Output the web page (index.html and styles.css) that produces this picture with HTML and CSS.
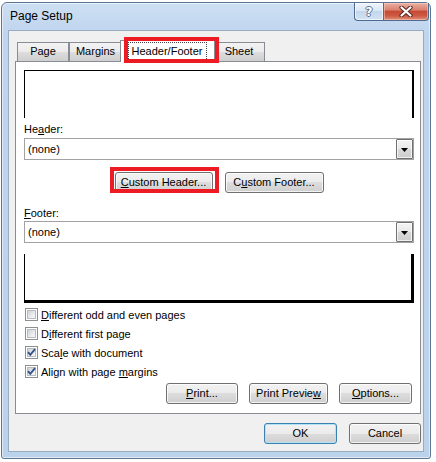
FILE: index.html
```html
<!DOCTYPE html>
<html>
<head>
<meta charset="utf-8">
<title>Page Setup</title>
<link rel="stylesheet" href="styles.css">
</head>
<body>
<div class="window">
  <div class="titlebar">
    <span class="title">Page Setup</span>
    <div class="caption-btns">
      <div class="cap help"><span class="qmark">?</span></div>
      <div class="cap close">
        <svg width="16" height="11" viewBox="0 0 16 11"><path d="M3.5 1.5 L12.5 9.5 M12.5 1.5 L3.5 9.5" stroke="#5a2a24" stroke-width="4.2" stroke-linecap="round" fill="none"/><path d="M3.5 1.5 L12.5 9.5 M12.5 1.5 L3.5 9.5" stroke="#ffffff" stroke-width="2.2" stroke-linecap="round" fill="none"/></svg>
      </div>
    </div>
  </div>
  <div class="client">
    <div class="tabs">
      <div class="tab w52">Page</div>
      <div class="tab w53">Margins</div>
      <div class="tab active"><span class="focus">Header/Footer</span></div>
      <div class="tab w52">Sheet</div>
    </div>
    <div class="panel">
      <div class="preview header-preview"></div>
      <div class="label first">He<u>a</u>der:</div>
      <div class="combo">
        <span class="combo-text">(none)</span>
        <span class="combo-btn"><svg width="7" height="4" viewBox="0 0 7 4"><path d="M0 0H7L3.5 4Z" fill="#000"/></svg></span>
      </div>
      <div class="custom-row">
        <div class="btn w98"><span><u>C</u>ustom Header...</span></div>
        <div class="btn w99"><span>C<u>u</u>stom Footer...</span></div>
      </div>
      <div class="label second"><u>F</u>ooter:</div>
      <div class="combo">
        <span class="combo-text">(none)</span>
        <span class="combo-btn"><svg width="7" height="4" viewBox="0 0 7 4"><path d="M0 0H7L3.5 4Z" fill="#000"/></svg></span>
      </div>
      <div class="preview footer-preview"></div>
      <div class="checks">
        <div class="check"><span class="cb"><i></i></span><span><u>D</u>ifferent odd and even pages</span></div>
        <div class="check"><span class="cb"><i></i></span><span>D<u>i</u>fferent first page</span></div>
        <div class="check"><span class="cb"><i></i><svg width="11" height="11" viewBox="0 0 11 11"><path d="M2 5.2 L4.3 7.8 L9 2.2" stroke="#34518a" stroke-width="1.9" fill="none"/></svg></span><span>Sca<u>l</u>e with document</span></div>
        <div class="check"><span class="cb"><i></i><svg width="11" height="11" viewBox="0 0 11 11"><path d="M2 5.2 L4.3 7.8 L9 2.2" stroke="#34518a" stroke-width="1.9" fill="none"/></svg></span><span>Align with page <u>m</u>argins</span></div>
      </div>
      <div class="print-row">
        <div class="btn w72"><span><u>P</u>rint...</span></div>
        <div class="btn w79"><span>Print Previe<u>w</u></span></div>
        <div class="btn w73"><span><u>O</u>ptions...</span></div>
      </div>
    </div>
    <div class="dialog-btns">
      <div class="btn default w73"><span>OK</span></div>
      <div class="btn w72"><span>Cancel</span></div>
    </div>
  </div>
</div>
<div class="callout callout-tab"></div>
<div class="callout callout-btn"></div>
</body>
</html>
```

FILE: styles.css
```css
* { box-sizing: border-box; }
html, body { margin: 0; padding: 0; }
body {
  width: 436px;
  height: 462px;
  background: #ffffff;
  font-family: "Liberation Sans", Arial, sans-serif;
  font-size: 11px;
  color: #000;
  position: relative;
  overflow: hidden;
}
u { text-decoration: underline; text-underline-offset: 1px; }

.window {
  margin: 2px 0 0 1px;
  width: 430px;
  height: 457px;
  border: 1px solid #5d7593;
  border-radius: 6px 6px 3px 3px;
  background: linear-gradient(#cddff3, #bfd5ee 30px, #bbd2eb 100%);
  box-shadow: inset 0 0 0 1px rgba(255,255,255,0.55);
  display: flex;
  flex-direction: column;
}

.titlebar {
  height: 27px;
  flex: none;
  display: flex;
  align-items: flex-start;
  justify-content: space-between;
  padding-left: 8px;
}
.title {
  font-size: 12px;
  line-height: 26px;
  color: #000;
}
.caption-btns {
  display: flex;
  margin-right: 1px;
}
.cap {
  height: 18px;
  border: 1px solid #4f6a8e;
  border-top: none;
  display: flex;
  align-items: center;
  justify-content: center;
}
.help {
  width: 29px;
  border-right: none;
  border-radius: 0 0 0 4px;
  background: linear-gradient(#eef4fb, #dbe7f5 45%, #c3d6ec 50%, #d3e3f4);
  box-shadow: inset 0 0 0 1px rgba(255,255,255,0.6);
}
.qmark {
  font-family: "DejaVu Sans", sans-serif;
  font-weight: bold;
  font-size: 12px;
  line-height: 12px;
  color: #fff;
  text-shadow: 1px 0 0 #5c6f8a, -1px 0 0 #5c6f8a, 0 1px 0 #5c6f8a, 0 -1px 0 #5c6f8a;
}
.close {
  width: 46px;
  border-radius: 0 0 4px 0;
  background: linear-gradient(#eab0a2, #d98372 40%, #c84a35 50%, #cc5a42 75%, #e2907a);
  box-shadow: inset 0 0 0 1px rgba(255,220,210,0.45);
}

.client {
  flex: 1;
  margin: 0 6px 6px 6px;
  background: #f0f0f0;
  border: 1px solid #98abc1;
  display: flex;
  flex-direction: column;
  padding: 6px 2px 0 6px;
}

.tabs {
  height: 24px;
  flex: none;
  display: flex;
  align-items: flex-end;
  padding-left: 2px;
  position: relative;
  z-index: 1;
}
.tab {
  height: 19px;
  border: 1px solid #898c95;
  border-bottom: none;
  line-height: 17px;
  text-align: center;
  background: linear-gradient(#f3f3f3, #ebebeb 50%, #dddddd 50%, #cfcfcf);
  white-space: nowrap;
}
.tab.w52 { width: 52px; }
.tab.w53 { width: 53px; }
.tab.active {
  width: 95px;
  height: 22px;
  margin: 0 -2px -1px -2px;
  padding-top: 1px;
  background: #fff;
  position: relative;
  z-index: 2;
}
.focus {
  display: inline-block;
  border: 1px dotted #444;
  padding: 0 4px 0 3px;
  line-height: 17px;
}

.panel {
  height: 353px;
  flex: none;
  background: #fff;
  border: 1px solid #898c95;
  padding: 8px 6px 0 8px;
  display: flex;
  flex-direction: column;
}

.header-preview {
  height: 48px;
  flex: none;
  border-top: 1px solid #000;
  border-left: 1px solid #000;
  border-right: 2px solid #000;
}
.footer-preview {
  height: 49px;
  flex: none;
  margin-top: 11px;
  border-left: 1px solid #000;
  border-right: 3px solid #000;
  border-bottom: 3px solid #000;
}

.label {
  flex: none;
  line-height: 16px;
}
.label.first { height: 20px; padding-top: 3px; }
.label.second { height: 28px; padding-top: 12px; }

.combo {
  height: 22px;
  flex: none;
  border: 1px solid #a2a2a2;
  background: #fff;
  display: flex;
  justify-content: space-between;
}
.combo-text {
  padding-left: 3px;
  line-height: 20px;
}
.combo-btn {
  width: 17px;
  height: 20px;
  border: 1px solid #707070;
  border-radius: 1px;
  background: linear-gradient(#f4f4f4, #e8e8e8 50%, #d9d9d9 50%, #cdcdcd);
  box-shadow: inset 0 0 0 1px rgba(255,255,255,0.7);
  display: flex;
  align-items: center;
  justify-content: center;
}
.combo-btn svg { margin-top: 1px; }

.btn {
  height: 21px;
  flex: none;
  border: 1px solid #707070;
  border-radius: 3px;
  background: linear-gradient(#f2f2f2, #ebebeb 50%, #dddddd 50%, #cfcfcf);
  box-shadow: inset 0 0 0 1px rgba(255,255,255,0.75);
  display: flex;
  align-items: center;
  justify-content: center;
  white-space: nowrap;
  line-height: 13px;
}
.btn.default {
  border-color: #3c7fb1;
  box-shadow: inset 0 0 0 1px #b3e2f7;
}
.w72 { width: 72px; }
.w73 { width: 73px; }
.w79 { width: 79px; }
.w98 { width: 98px; }
.w99 { width: 99px; }

.custom-row {
  margin-top: 12px;
  display: flex;
  justify-content: center;
  gap: 12px;
}

.checks {
  margin-top: 2px;
  display: flex;
  flex-direction: column;
}
.check {
  height: 19px;
  display: flex;
  align-items: center;
  gap: 3px;
  padding-left: 1px;
}
.cb {
  width: 13px;
  height: 13px;
  flex: none;
  border: 1px solid #8e8f8f;
  background: #fff;
  display: grid;
  place-items: center;
}
.cb > i, .cb > svg { grid-area: 1 / 1; }
.cb > i {
  display: block;
  width: 9px;
  height: 9px;
  border: 1px solid #b7bcc3;
  background: linear-gradient(135deg, #cdd1d7, #eff0f1 70%, #f7f7f7);
}

.print-row {
  margin-top: 2px;
  margin-right: 2px;
  display: flex;
  justify-content: flex-end;
  gap: 11px;
}

.dialog-btns {
  margin-top: 9px;
  display: flex;
  justify-content: flex-end;
  gap: 12px;
}

.callout {
  position: absolute;
  border: 4px solid #ed1c24;
  z-index: 10;
}
.callout-tab { left: 124px; top: 37px; width: 95px; height: 26px; }
.callout-btn { left: 110px; top: 167px; width: 109px; height: 26px; }
```
